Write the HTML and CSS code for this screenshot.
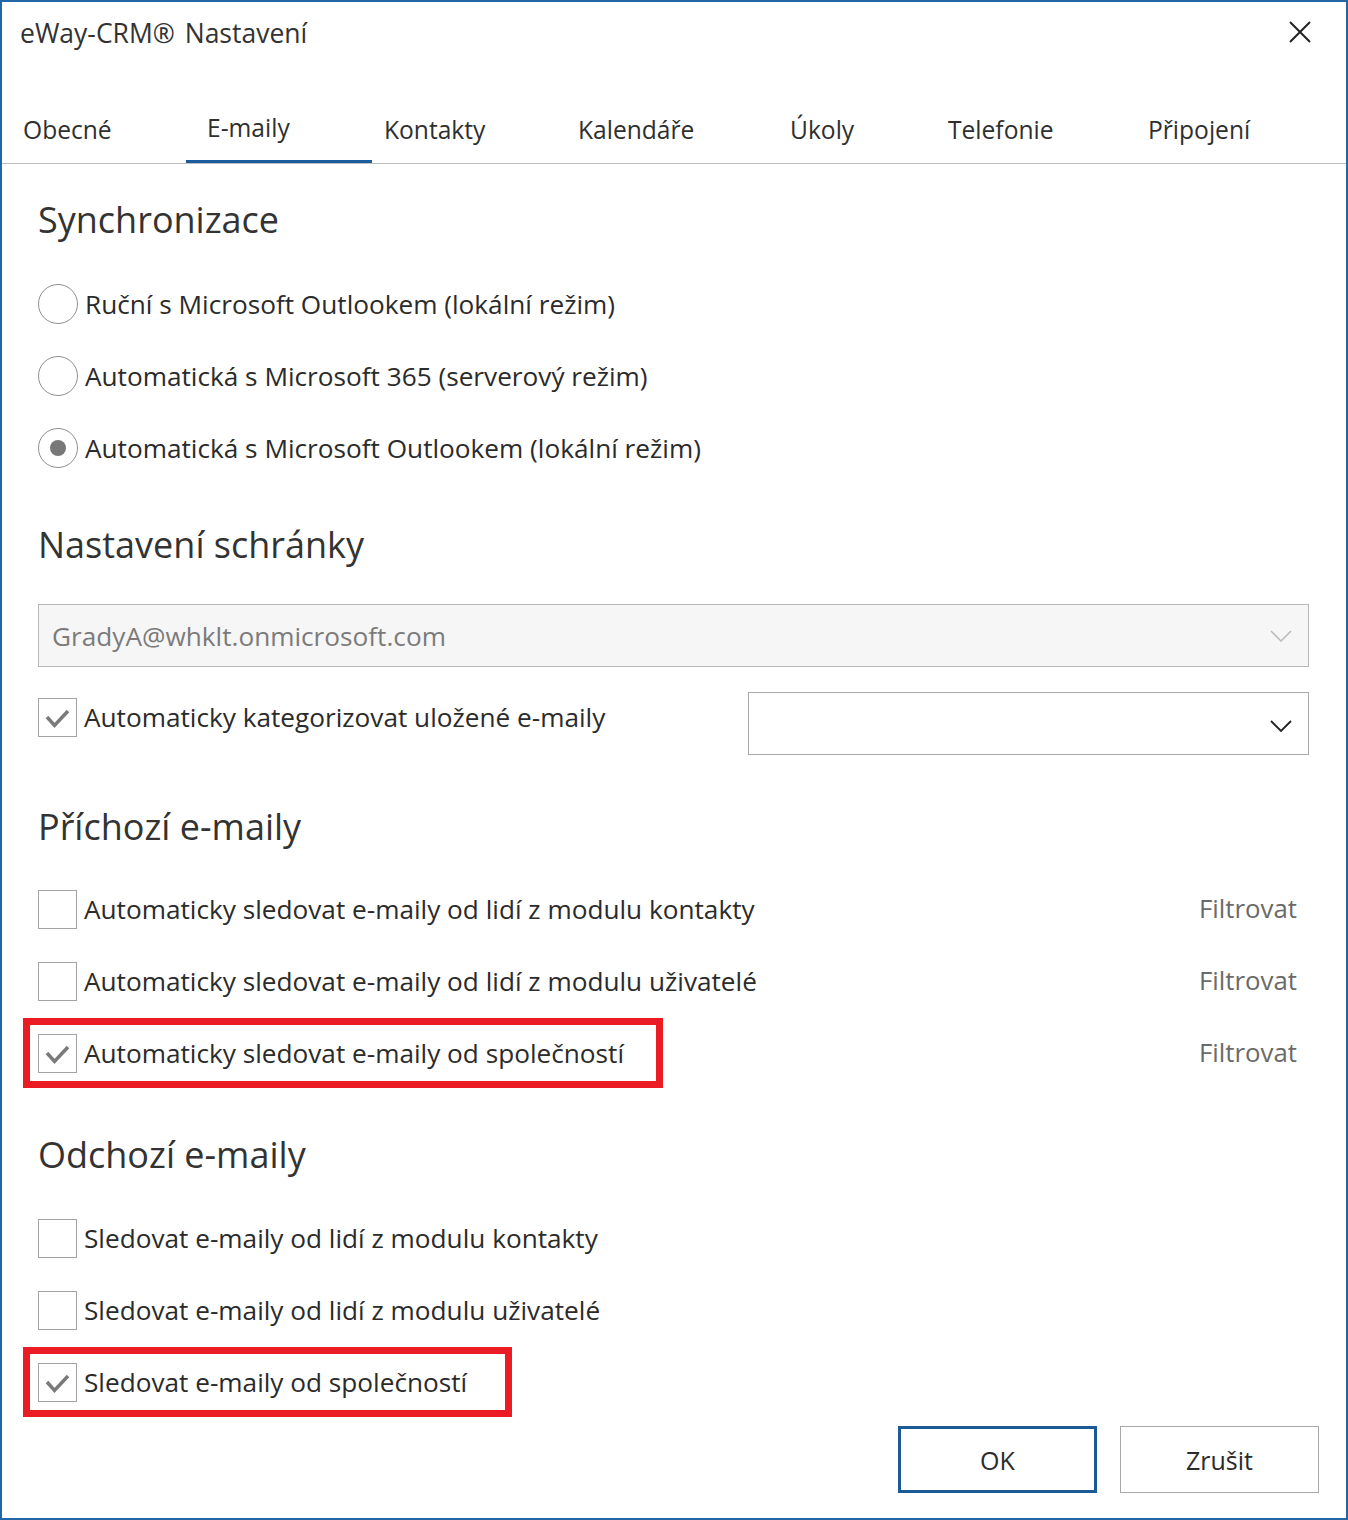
FILE: index.html
```html
<!DOCTYPE html>
<html lang="cs">
<head>
<meta charset="utf-8">
<title>eWay-CRM Nastavení</title>
<link rel="stylesheet" href="styles.css">
</head>
<body>
<div class="window">
  <header class="titlebar">
    <span class="title">eWay-CRM® Nastavení</span>
    <span class="close" aria-label="Zavřít">
      <svg width="22" height="22" viewBox="0 0 22 22"><path d="M1 1 L21 21 M21 1 L1 21" stroke="#222" stroke-width="2" fill="none"/></svg>
    </span>
  </header>
  <nav class="tabs">
    <span class="tab tab-obecne">Obecné</span>
    <span class="tab tab-emaily active">E-maily</span>
    <span class="tab tab-kontakty">Kontakty</span>
    <span class="tab tab-kalendare">Kalendáře</span>
    <span class="tab tab-ukoly">Úkoly</span>
    <span class="tab tab-telefonie">Telefonie</span>
    <span class="tab tab-pripojeni">Připojení</span>
  </nav>
  <main class="content">
    <h2 class="section-title first">Synchronizace</h2>
    <div class="option-list radio-list">
      <label class="option"><span class="radio"></span><span class="label">Ruční s Microsoft Outlookem (lokální režim)</span></label>
      <label class="option"><span class="radio"></span><span class="label">Automatická s Microsoft 365 (serverový režim)</span></label>
      <label class="option"><span class="radio checked"></span><span class="label">Automatická s Microsoft Outlookem (lokální režim)</span></label>
    </div>

    <h2 class="section-title after-radios">Nastavení schránky</h2>
    <div class="select select-disabled">
      <span class="select-text">GradyA@whklt.onmicrosoft.com</span>
      <svg class="chevron" width="22" height="12" viewBox="0 0 22 12"><path d="M1 1 L11 11 L21 1" stroke="#b9b9b9" stroke-width="1.5" fill="none"/></svg>
    </div>
    <div class="cat-row">
      <label class="option cat-option"><span class="checkbox checked"><svg width="39" height="39" viewBox="0 0 39 39"><path d="M9 19 L16.5 27.5 L30 13" stroke="#7a7a7a" stroke-width="3.5" fill="none"/></svg></span><span class="label">Automaticky kategorizovat uložené e-maily</span></label>
      <div class="select select-cat">
        <svg class="chevron" width="22" height="12" viewBox="0 0 22 12"><path d="M1 1 L11 11 L21 1" stroke="#222" stroke-width="1.8" fill="none"/></svg>
      </div>
    </div>

    <h2 class="section-title after-cat">Příchozí e-maily</h2>
    <div class="option-list incoming-list">
      <div class="filter-row">
        <label class="option"><span class="checkbox"></span><span class="label">Automaticky sledovat e-maily od lidí z modulu kontakty</span></label>
        <span class="filter-link">Filtrovat</span>
      </div>
      <div class="filter-row">
        <label class="option"><span class="checkbox"></span><span class="label">Automaticky sledovat e-maily od lidí z modulu uživatelé</span></label>
        <span class="filter-link">Filtrovat</span>
      </div>
      <div class="filter-row">
        <label class="option highlight hl-incoming"><span class="checkbox checked"><svg width="39" height="39" viewBox="0 0 39 39"><path d="M9 19 L16.5 27.5 L30 13" stroke="#7a7a7a" stroke-width="3.5" fill="none"/></svg></span><span class="label">Automaticky sledovat e-maily od společností</span></label>
        <span class="filter-link">Filtrovat</span>
      </div>
    </div>

    <h2 class="section-title after-incoming">Odchozí e-maily</h2>
    <div class="option-list outgoing-list">
      <label class="option"><span class="checkbox"></span><span class="label">Sledovat e-maily od lidí z modulu kontakty</span></label>
      <label class="option"><span class="checkbox"></span><span class="label">Sledovat e-maily od lidí z modulu uživatelé</span></label>
      <label class="option highlight hl-outgoing"><span class="checkbox checked"><svg width="39" height="39" viewBox="0 0 39 39"><path d="M9 19 L16.5 27.5 L30 13" stroke="#7a7a7a" stroke-width="3.5" fill="none"/></svg></span><span class="label">Sledovat e-maily od společností</span></label>
    </div>
  </main>
  <footer class="buttons">
    <span class="btn btn-primary">OK</span>
    <span class="btn">Zrušit</span>
  </footer>
</div>
</body>
</html>
```
FILE: styles.css
```css
* { box-sizing: border-box; }
html, body { margin: 0; padding: 0; background: #fff; }
body {
  font-family: "Open Sans", "Noto Sans", "DejaVu Sans", sans-serif;
  color: #2b2b2b;
}
.window {
  width: 1348px;
  height: 1520px;
  border: 2px solid #2266a6;
  background: #fff;
  display: flex;
  flex-direction: column;
}
.titlebar {
  height: 62px;
  display: flex;
  align-items: center;
  justify-content: space-between;
  padding: 0 35px 0 18px;
}
.title { font-size: 26.5px; color: #333; word-spacing: 3px; }
.close { display: flex; width: 22px; height: 22px; margin-top: -2px; }

.tabs {
  height: 100px;
  display: flex;
  border-bottom: 1px solid #bdbdbd;
}
.tab {
  height: 99px;
  padding-top: 48px;
  line-height: 36px;
  font-size: 24.6px;
  color: #2f2f2f;
  padding-left: 21px;
}
.tab-obecne { width: 184px; }
.tab-emaily { width: 186px; }
.tab-kontakty { width: 185px; padding-left: 12px; }
.tab-kalendare { width: 212px; }
.tab-ukoly { width: 158px; }
.tab-telefonie { width: 200px; }
.tab-pripojeni { width: 200px; }
.tab.active { box-shadow: inset 0 -3px 0 #1d5c9c; padding-top: 46px; }

.content { padding: 0 37px 0 36px; }
.section-title {
  margin: 0;
  font-weight: 400;
  font-size: 36px;
  line-height: 44px;
  color: #333;
}
.section-title.first { margin-top: 34px; }
.section-title.after-radios { margin-top: 55px; }
.section-title.after-cat { margin-top: 50px; }
.section-title.after-incoming { margin-top: 60px; }

.option-list { display: flex; flex-direction: column; align-items: flex-start; gap: 32px; }
.incoming-list { align-items: stretch; }
.radio-list { margin-top: 42px; }
.incoming-list { margin-top: 40px; }
.outgoing-list { margin-top: 41px; }

.option {
  display: flex;
  align-items: center;
  gap: 7px;
  height: 40px;
  font-size: 26.2px;
  color: #2b2b2b;
}
.option .label { white-space: nowrap; }

.radio {
  width: 40px;
  height: 40px;
  border-radius: 50%;
  border: 1.5px solid #8f8f8f;
  display: flex;
  align-items: center;
  justify-content: center;
  flex: none;
}
.radio.checked::after {
  content: "";
  width: 16px;
  height: 16px;
  border-radius: 50%;
  background: #787878;
}

.checkbox {
  width: 39px;
  height: 39px;
  border: 1px solid #a3a3a3;
  flex: none;
  display: flex;
  background: #fff;
}
.checkbox svg { display: block; margin: -1px; }

.select {
  height: 63px;
  border: 1px solid #b4b4b4;
  display: flex;
  align-items: center;
  justify-content: space-between;
  padding: 0 16px 0 13px;
}
.select-disabled {
  margin-top: 37px;
  background: #f6f6f6;
  border-color: #b8b8b8;
}
.select-text { font-size: 26.2px; color: #7b7b7b; }
.select-cat {
  width: 561px;
  justify-content: flex-end;
  background: #fff;
  border-color: #a9a9a9;
}
.chevron { display: block; }
.select-cat .chevron { margin-top: 4px; }

.cat-row {
  margin-top: 25px;
  display: flex;
  justify-content: space-between;
  align-items: flex-start;
}
.cat-option { margin-top: 5px; }

.filter-row {
  display: flex;
  align-items: center;
  justify-content: space-between;
}
.filter-link {
  font-size: 25.8px;
  color: #6a6a6a;
  margin-right: 12px;
  margin-top: -3px;
}

.highlight {
  outline: 7px solid #ec1c24;
  outline-offset: 8px;
}
.hl-incoming { padding-right: 24px; }
.hl-outgoing { padding-right: 30px; }

.buttons {
  margin-top: 24px;
  display: flex;
  justify-content: flex-end;
  gap: 23px;
  padding-right: 27px;
}
.btn {
  width: 199px;
  height: 67px;
  border: 1px solid #a8a8a8;
  display: flex;
  align-items: center;
  justify-content: center;
  font-size: 25px;
  color: #2b2b2b;
  background: #fff;
}
.btn-primary { border: 3px solid #1c5a96; }
```
